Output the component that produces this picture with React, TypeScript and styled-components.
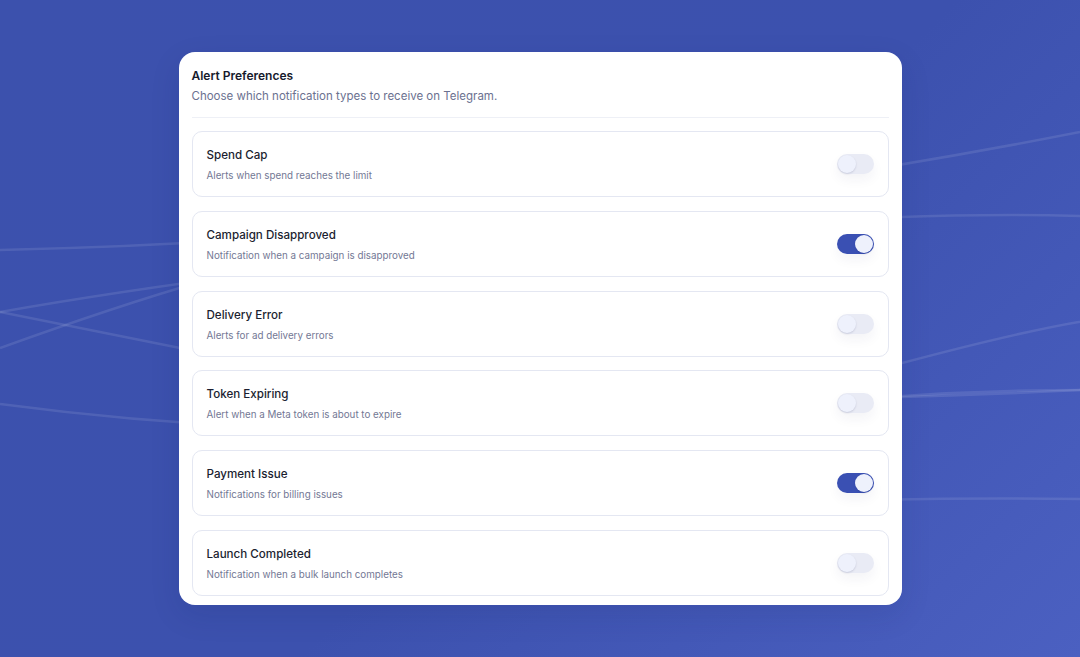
import React, { useState } from 'react';
import styled, { createGlobalStyle } from 'styled-components';

const GlobalStyle = createGlobalStyle`
  html, body {
    margin: 0;
    padding: 0;
    height: 100%;
  }
  body {
    font-family: Inter, "Noto Sans", "Liberation Sans", sans-serif;
    -webkit-font-smoothing: antialiased;
  }
  #root {
    height: 100%;
  }
`;

const prefs = [
  { id: 'spend', title: 'Spend Cap', desc: 'Alerts when spend reaches the limit', on: false },
  { id: 'disapproved', title: 'Campaign Disapproved', desc: 'Notification when a campaign is disapproved', on: true },
  { id: 'delivery', title: 'Delivery Error', desc: 'Alerts for ad delivery errors', on: false },
  { id: 'token', title: 'Token Expiring', desc: 'Alert when a Meta token is about to expire', on: false },
  { id: 'payment', title: 'Payment Issue', desc: 'Notifications for billing issues', on: true },
  { id: 'launch', title: 'Launch Completed', desc: 'Notification when a bulk launch completes', on: false },
];

const Backdrop = () => (
  <BackdropSvg viewBox="0 0 1080 657" preserveAspectRatio="none" aria-hidden="true">
    <path d="M0,250 Q540,238 1080,132" />
    <path d="M0,312 Q240,270 560,240 T1080,216" />
    <path d="M0,312 L180,348 Q500,420 1080,390" />
    <path d="M0,348 Q120,305 200,282 T560,200" />
    <path d="M0,404 Q500,470 902,363 T1080,390" />
    <path d="M902,396 Q990,390 1080,390" />
    <path d="M520,520 Q800,495 1080,499" />
  </BackdropSvg>
);

export default function App() {
  const [state, setState] = useState<Record<string, boolean>>(
    Object.fromEntries(prefs.map((p) => [p.id, p.on]))
  );

  return (
    <Page>
      <GlobalStyle />
      <Backdrop />
      <Card>
        <Header>
          <Title>Alert Preferences</Title>
          <Subtitle>Choose which notification types to receive on Telegram.</Subtitle>
        </Header>
        <List>
          {prefs.map((p) => (
            <Item key={p.id}>
              <Text>
                <ItemTitle>{p.title}</ItemTitle>
                <ItemDesc>{p.desc}</ItemDesc>
              </Text>
              <Toggle
                $on={state[p.id]}
                onClick={() => setState((s) => ({ ...s, [p.id]: !s[p.id] }))}
                aria-pressed={state[p.id]}
              >
                <Thumb $on={state[p.id]} />
              </Toggle>
            </Item>
          ))}
        </List>
      </Card>
    </Page>
  );
}

const Page = styled.div`
  position: relative;
  min-height: 100vh;
  display: flex;
  align-items: center;
  justify-content: center;
  overflow: hidden;
  background: linear-gradient(135deg, #3c51ad 0%, #3c51ae 55%, #4b60c1 100%);
`;

const BackdropSvg = styled.svg`
  position: absolute;
  inset: 0;
  width: 100%;
  height: 100%;
  pointer-events: none;

  & path {
    fill: none;
    stroke: rgba(255, 255, 255, 0.1);
    stroke-width: 2.5;
  }
`;

const Card = styled.div`
  position: relative;
  width: 723px;
  box-sizing: border-box;
  padding: 15px 13px 9.5px;
  background: #ffffff;
  border-radius: 16px;
  box-shadow: 0 10px 30px rgba(20, 30, 90, 0.12);
`;

const Header = styled.div`
  padding-bottom: 12px;
  border-bottom: 1px solid #eef0f6;
  margin-bottom: 13.5px;
`;

const Title = styled.div`
  font-size: 12px;
  line-height: 18px;
  font-weight: 600;
  color: #161a2c;
`;

const Subtitle = styled.div`
  margin-top: 2px;
  font-size: 11.5px;
  line-height: 18px;
  color: #6b7190;
`;

const List = styled.div`
  display: flex;
  flex-direction: column;
  gap: 13.8px;
`;

const Item = styled.div`
  display: flex;
  align-items: center;
  justify-content: space-between;
  height: 66px;
  box-sizing: border-box;
  padding: 2px 14px 0;
  border: 1px solid #e4e7f2;
  border-radius: 10px;
`;

const Text = styled.div`
  display: flex;
  flex-direction: column;
`;

const ItemTitle = styled.div`
  font-size: 11.6px;
  line-height: 16px;
  font-weight: 500;
  color: #1b1e30;
`;

const ItemDesc = styled.div`
  margin-top: 6px;
  font-size: 9.8px;
  line-height: 14px;
  color: #737894;
`;

const Toggle = styled.button<{ $on: boolean }>`
  position: relative;
  width: 37px;
  height: 20px;
  margin-top: -2px;
  padding: 0;
  border: none;
  border-radius: 10px;
  cursor: pointer;
  background: ${(p) => (p.$on ? '#3a50b3' : '#e9ebf5')};
  box-shadow: 0 6px 12px rgba(30, 40, 90, 0.05);
`;

const Thumb = styled.span<{ $on: boolean }>`
  position: absolute;
  top: 1px;
  left: ${(p) => (p.$on ? '18px' : '1px')};
  width: 18px;
  height: 18px;
  border-radius: 50%;
  background: #eef1fc;
  box-shadow: 0 1px 2px rgba(20, 30, 80, 0.15);
`;
